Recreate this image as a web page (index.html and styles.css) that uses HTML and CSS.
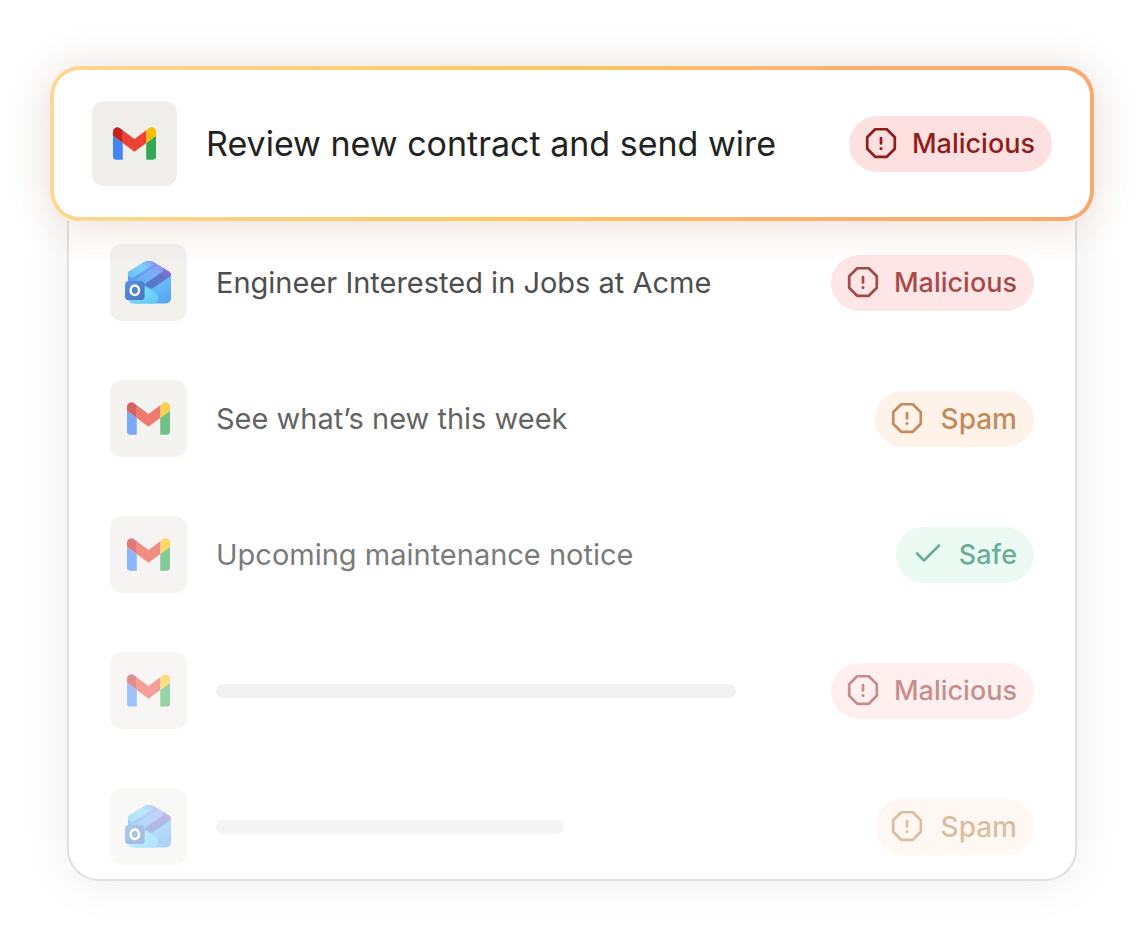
FILE: index.html
```html
<!DOCTYPE html>
<html lang="en">
<head>
<meta charset="utf-8">
<meta name="viewport" content="width=device-width, initial-scale=1">
<title>Inbox triage</title>
<link rel="stylesheet" href="styles.css">
</head>
<body>
<svg class="defs" width="0" height="0" aria-hidden="true">
  <defs>
    <linearGradient id="ol-light" x1="0" y1="1" x2="1" y2="0"><stop offset="0" stop-color="#3fb4f6"/><stop offset="0.6" stop-color="#5cc4fa"/><stop offset="1" stop-color="#5a8df0"/></linearGradient>
    <linearGradient id="ol-top" x1="0" y1="1" x2="1" y2="0"><stop offset="0" stop-color="#2f7ee0"/><stop offset="0.5" stop-color="#4a8aea"/><stop offset="1" stop-color="#7a66e4"/></linearGradient>
    <linearGradient id="ol-mid" x1="0" y1="1" x2="1" y2="0"><stop offset="0" stop-color="#369af2"/><stop offset="0.6" stop-color="#579cf4"/><stop offset="1" stop-color="#747aea"/></linearGradient>
    <linearGradient id="ol-dark" x1="0" y1="1" x2="1" y2="0"><stop offset="0" stop-color="#2358bd"/><stop offset="0.6" stop-color="#3b52c2"/><stop offset="1" stop-color="#8050d0"/></linearGradient>
    <linearGradient id="ol-body" x1="0" y1="0" x2="1" y2="1"><stop offset="0" stop-color="#2c80e4"/><stop offset="0.6" stop-color="#3fa9f5"/><stop offset="1" stop-color="#2f83ea"/></linearGradient>
    <linearGradient id="ol-front" x1="0" y1="0" x2="1" y2="1"><stop offset="0" stop-color="#6be2fb"/><stop offset="1" stop-color="#35b9f5"/></linearGradient>
    <linearGradient id="ol-box" x1="0" y1="0" x2="1" y2="1"><stop offset="0" stop-color="#2f7ad6"/><stop offset="1" stop-color="#1f4fae"/></linearGradient>
    <symbol id="gmail" viewBox="52 42 88 66">
      <path fill="#4285f4" d="M58 108h14V74L52 59v43c0 3.32 2.69 6 6 6"/>
      <path fill="#34a853" d="M120 108h14c3.32 0 6-2.69 6-6V59l-20 15"/>
      <path fill="#fbbc04" d="M120 48v26l20-15v-8c0-7.42-8.47-11.65-14.4-7.2"/>
      <path fill="#ea4335" d="M72 74V48l24 18 24-18v26L96 92"/>
      <path fill="#c5221f" d="M52 51v8l20 15V48l-5.6-4.2c-5.94-4.45-14.4-.22-14.4 7.2"/>
    </symbol>
    <symbol id="outlook" viewBox="0 0 48 44">
      <path fill="url(#ol-body)" d="M3 13L47 12.500V37Q47 43.500 40.500 43.500H10Q3 43.500 3 37Z"/>
      <path fill="url(#ol-top)" d="M3 17V12.500Q3 11.500 4.500 10.500L19 1.500Q24.500-1.500 30 1.500L38 6.500L14 20.500Z"/>
      <path fill="url(#ol-light)" d="M3 14.500V12.500Q3 11.500 4.500 10.500L19 1.500Q23.500-1 28 0.500Q31.500 1.800 28 4.500L9 16.500Q5 18 3 14.500Z"/>
      <path fill="url(#ol-mid)" d="M10.500 19.500L31 5.500Q33.500 3.800 36 5.300L38.500 7Q40.500 9 37.500 11.500L19 24.500Z"/>
      <path fill="url(#ol-dark)" d="M19 24.500L37.500 11.500Q40.500 9 37.500 6.200L45.500 11Q48.500 13.500 45.500 16L27.500 28.500Z"/>
      <path fill="url(#ol-front)" d="M20 26L31 32.500Q35 35.500 33.500 40Q32.500 43.500 29 43.500H10Q4 43 3 38Z"/>
      <rect x="0" y="20.500" width="20" height="19.500" rx="4" fill="url(#ol-box)"/>
      <ellipse cx="10" cy="30" rx="4.300" ry="4.900" fill="none" stroke="#fff" stroke-width="2.500"/>
    </symbol>
    <symbol id="alert" viewBox="0 0 32 32">
      <path fill="none" stroke="currentColor" stroke-width="2.700" stroke-linejoin="round" d="M10.200 1.200H21.800L29.800 9.200V20.800L21.800 28.800H10.200L2.200 20.800V9.200Z"/>
      <path fill="none" stroke="currentColor" stroke-width="2.700" stroke-linecap="round" d="M16 10V15.500"/>
      <circle cx="16" cy="20.500" r="1.500" fill="currentColor"/>
    </symbol>
    <symbol id="check" viewBox="0 0 32 32">
      <path fill="none" stroke="currentColor" stroke-width="2.700" stroke-linecap="round" stroke-linejoin="round" d="M5 14.500L12 21.500L27 6.500"/>
    </symbol>
  </defs>
</svg>
<main class="inbox">
  <article class="featured">
    <span class="app app-large"><svg class="gmail"><use href="#gmail"/></svg></span>
    <h1 class="featured-title">Review new contract and send wire</h1>
    <span class="badge malicious"><svg class="badge-icon"><use href="#alert"/></svg>Malicious</span>
  </article>
  <ul class="list">
    <li class="row fade-1">
      <span class="app"><svg class="outlook"><use href="#outlook"/></svg></span>
      <p class="subject">Engineer Interested in Jobs at Acme</p>
      <span class="badge malicious"><svg class="badge-icon"><use href="#alert"/></svg>Malicious</span>
    </li>
    <li class="row fade-2">
      <span class="app"><svg class="gmail"><use href="#gmail"/></svg></span>
      <p class="subject">See what’s new this week</p>
      <span class="badge spam"><svg class="badge-icon"><use href="#alert"/></svg>Spam</span>
    </li>
    <li class="row fade-3">
      <span class="app"><svg class="gmail"><use href="#gmail"/></svg></span>
      <p class="subject">Upcoming maintenance notice</p>
      <span class="badge safe"><svg class="badge-icon"><use href="#check"/></svg>Safe</span>
    </li>
    <li class="row fade-4">
      <span class="app"><svg class="gmail"><use href="#gmail"/></svg></span>
      <div class="subject"><div class="bar bar-long"></div></div>
      <span class="badge malicious"><svg class="badge-icon"><use href="#alert"/></svg>Malicious</span>
    </li>
    <li class="row fade-5">
      <span class="app"><svg class="outlook"><use href="#outlook"/></svg></span>
      <div class="subject"><div class="bar bar-short"></div></div>
      <span class="badge spam"><svg class="badge-icon"><use href="#alert"/></svg>Spam</span>
    </li>
  </ul>
</main>
</body>
</html>
```
FILE: styles.css
```css
* { box-sizing: border-box; }

body {
  margin: 0;
  background: #fff;
  color: #222;
  font-family: Inter, "Liberation Sans", sans-serif;
}

.defs { position: absolute; }

.inbox { padding: 66px 50px 46px; }

.featured {
  position: relative;
  z-index: 1;
  display: flex;
  align-items: center;
  gap: 29px;
  padding: 31px 38px;
  border: 4px solid transparent;
  border-radius: 30px;
  background:
    linear-gradient(#fff, #fff) padding-box,
    linear-gradient(100deg, #fdd896 0%, #fbc95f 45%, #fbb070 75%, #faa86c 100%) border-box;
  box-shadow:
    0 0 50px rgba(60, 50, 40, 0.1),
    0 8px 36px rgba(240, 120, 60, 0.1);
}

.featured-title {
  flex: 1;
  margin: 0;
  font-size: 34px;
  line-height: 44px;
  font-weight: 400;
}

.list {
  margin: 0 17px;
  padding: 23px 41px 14px;
  display: grid;
  gap: 59px;
  list-style: none;
  border: 2px solid #e0e0e0;
  border-top: 0;
  border-radius: 0 0 32px 32px;
  background: #fff;
  box-shadow: 0 0 50px rgba(0, 0, 0, 0.08);
}

.row {
  display: flex;
  align-items: center;
  gap: 29px;
}

.fade-1 { opacity: 0.8; }
.fade-2 { opacity: 0.7; }
.fade-3 { opacity: 0.6; }
.fade-4 { opacity: 0.5; }
.fade-5 { opacity: 0.4; }

.app {
  flex: none;
  display: grid;
  place-items: center;
  width: 77px;
  height: 77px;
  border-radius: 12px;
  background: #f0eeeb;
}

.app-large { width: 85px; height: 85px; }

.gmail { width: 43px; height: 33px; }
.outlook { width: 47px; height: 43px; }

.subject {
  flex: 1;
  margin: 0;
  font-size: 29px;
  line-height: 36px;
}

.bar {
  height: 14px;
  border-radius: 7px;
  background: #e6e6e6;
}

.bar-long { width: 520px; max-width: 100%; }
.bar-short { width: 348px; max-width: 100%; }

.badge {
  flex: none;
  display: flex;
  align-items: center;
  gap: 15px;
  height: 56px;
  padding: 0 17px 0 16px;
  border-radius: 28px;
  font-size: 27px;
  font-weight: 500;
}

.badge-icon { width: 32px; height: 32px; }

.malicious { background: #ffe0e0; color: #8f1d1a; }
.spam { gap: 18px; background: #ffeddf; color: #a75d16; font-size: 28px; }
.safe { background: #def9ec; color: #0a7a52; }
```
